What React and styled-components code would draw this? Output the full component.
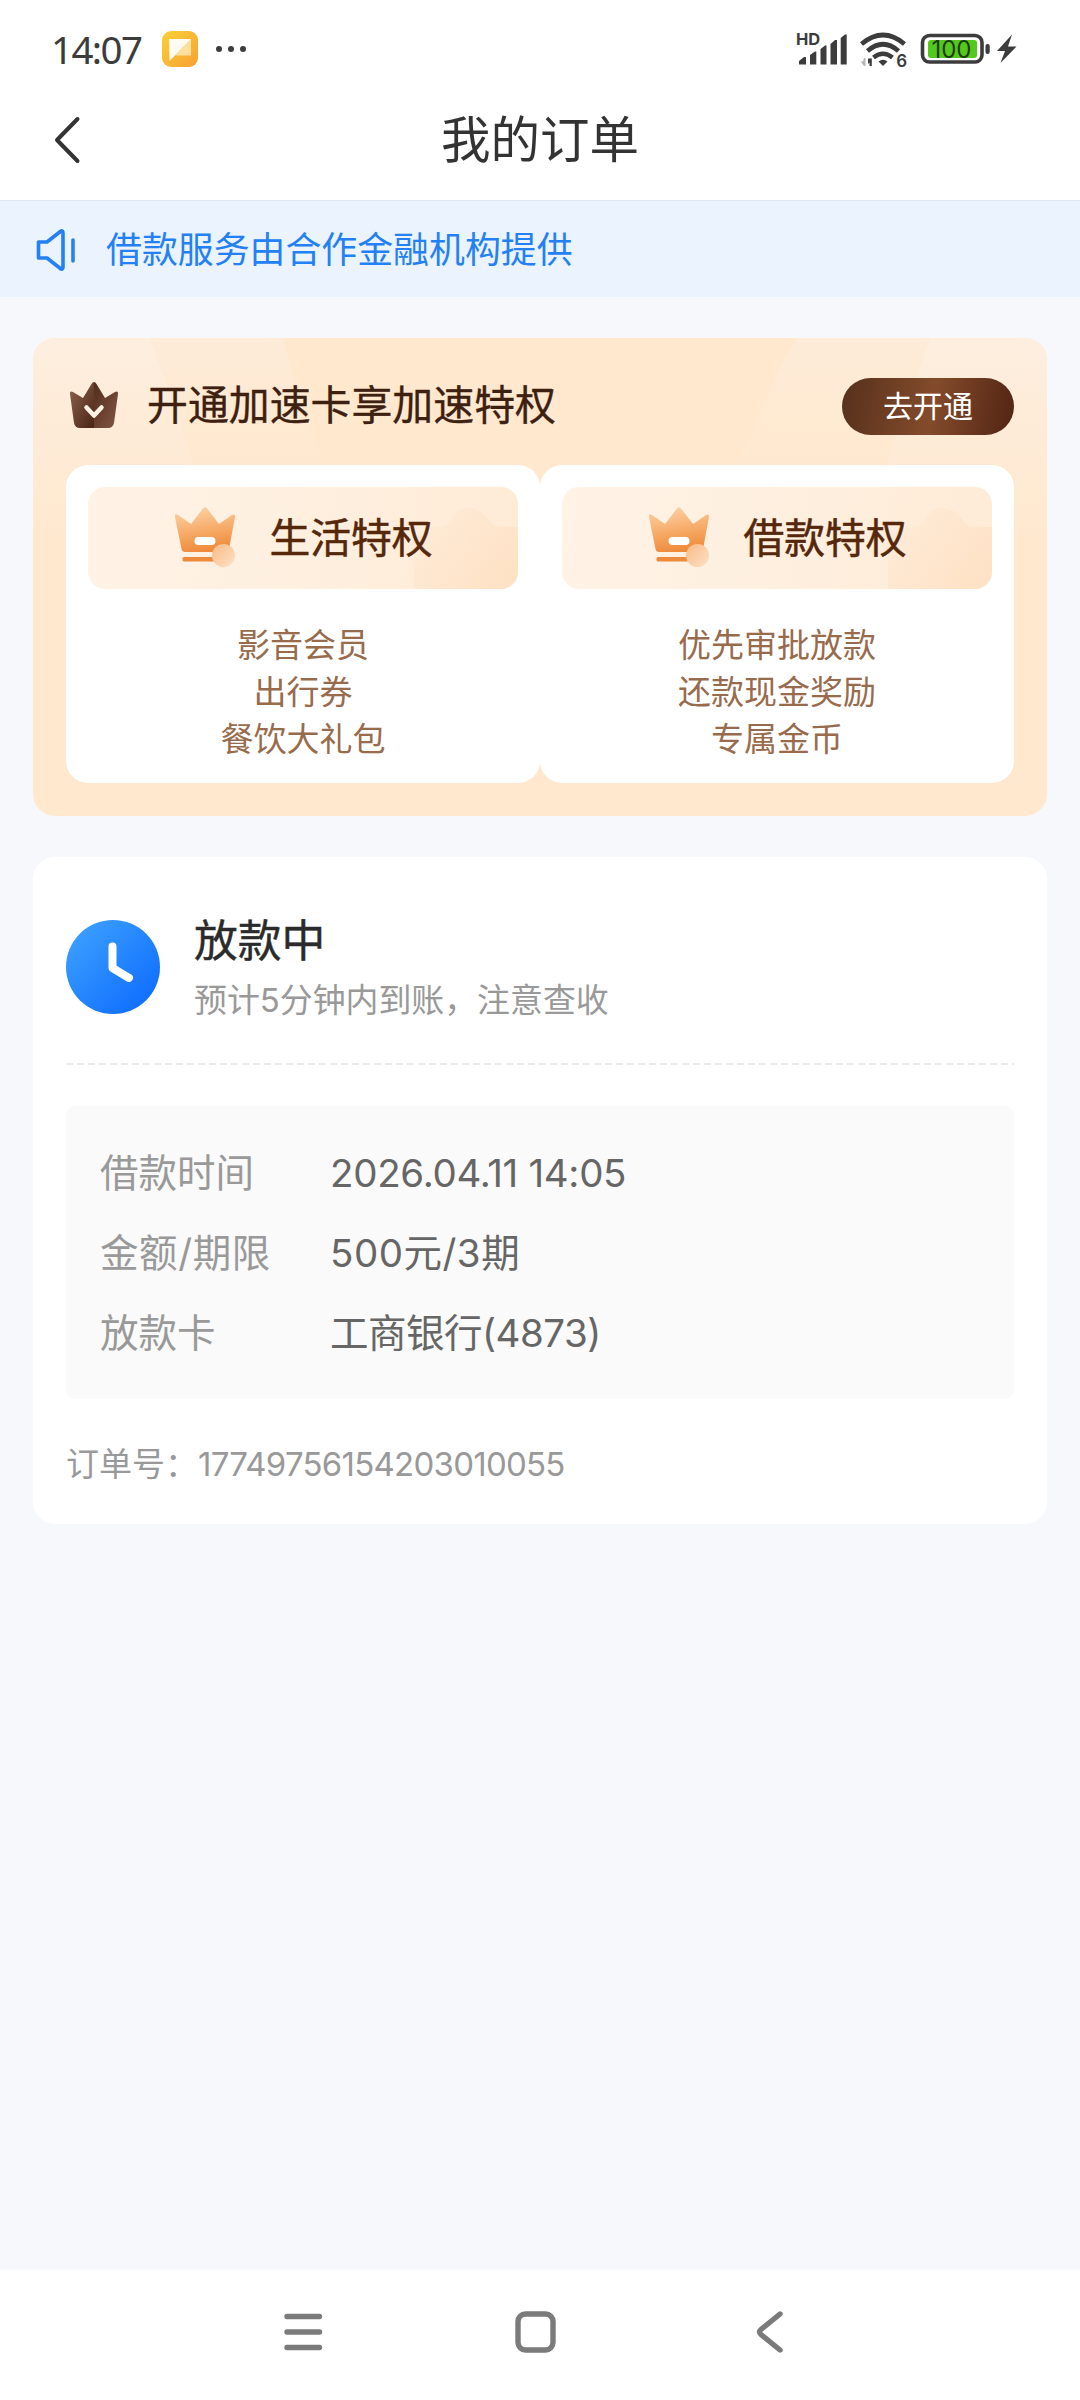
// src/App.jsx

import React from 'react';
import styled, { createGlobalStyle } from 'styled-components';

const GlobalStyle = createGlobalStyle`
    * {
        box-sizing: border-box;
    }

    body {
        margin: 0;
        background: #f6f8fb;
        font-family: Inter, "Noto Sans CJK SC", sans-serif;
        color: #333333;
    }
`;

const Page = styled.div`
    display: flex;
    flex-direction: column;
    width: 1080px;
    height: 2400px;
    background: #f6f8fb;
    white-space: nowrap;
`;

/* Status bar */

const StatusBar = styled.div`
    display: flex;
    align-items: center;
    height: 98px;
    padding: 0 62px 0 51px;
    background: #ffffff;
`;

const Clock = styled.span`
    width: 111px;
    font-family: "Noto Sans", sans-serif;
    font-size: 38.5px;
    line-height: 60px;
    letter-spacing: -1.6px;
    color: #3c3c3c;
`;

const AppBadge = styled.svg`
    width: 36px;
    height: 36px;
    margin-right: 17px;
`;

const Dots = styled.svg`
    width: 32px;
    height: 8px;
    margin-right: auto;
`;

const Indicators = styled.svg`
    width: 222px;
    height: 48px;
    font-family: Inter, sans-serif;
`;

/* Title bar */

const TitleBar = styled.header`
    display: grid;
    grid-template-columns: 200px 1fr 200px;
    align-items: center;
    height: 102px;
    padding-bottom: 18px;
    background: #ffffff;
`;

const BackIcon = styled.svg`
    width: 30px;
    height: 48px;
    margin-left: 52px;
`;

const Title = styled.h1`
    margin: 0;
    font-size: 49.5px;
    line-height: 60px;
    font-weight: 400;
    text-align: center;
    color: #333333;
`;

const Notice = styled.div`
    display: flex;
    align-items: center;
    gap: 30px;
    height: 97px;
    padding-left: 34px;
    border-top: 1px solid #dfe8f1;
    background: #eaf3fe;
    font-size: 35.9px;
    line-height: 48px;
    color: #2380f5;
`;

const NoticeText = styled.span`
    padding-top: 2px;
`;

const SpeakerIcon = styled.svg`
    width: 42px;
    height: 44px;
    margin-top: 2px;
`;

const Content = styled.main`
    display: flex;
    flex-direction: column;
    flex: 1;
    gap: 41px;
    padding: 41px 33px 0;
`;

/* Privilege card */

const PromoCard = styled.section`
    position: relative;
    height: 478px;
    padding: 40px 33px 33px;
    border-radius: 22px;
    background: #ffe8ce;
    overflow: hidden;
`;

const PromoRays = styled.svg`
    position: absolute;
    left: 0;
    top: 0;
    width: 1014px;
    height: 478px;
`;

const PromoHead = styled.div`
    position: relative;
    display: flex;
    align-items: center;
    height: 57px;
    margin-bottom: 30px;
`;

const BadgeIcon = styled.svg`
    width: 50px;
    height: 48px;
    margin: 0 28px 4px 3px;
`;

const PromoTitle = styled.h2`
    margin: 0 auto 3px 0;
    font-size: 40.9px;
    line-height: 54px;
    font-weight: 400;
    color: #3d2010;
    -webkit-text-stroke: 0.35px;
`;

const OpenButton = styled.button`
    width: 172px;
    height: 57px;
    padding: 0;
    border: 0;
    border-radius: 29px;
    background: linear-gradient(100deg, #56301c 0%, #834b2b 52%, #522413 100%);
    font-family: inherit;
    font-size: 30px;
    line-height: 57px;
    color: #ffffff;
`;

const Panels = styled.div`
    position: relative;
    display: grid;
    grid-template-columns: 1fr 1fr;
`;

const Panel = styled.div`
    height: 318px;
    padding: 22px 22px 0;
    border-radius: 22px;
    background: #ffffff;
`;

const PanelHead = styled.div`
    position: relative;
    display: flex;
    align-items: center;
    justify-content: center;
    gap: 34px;
    height: 102px;
    margin-bottom: 33px;
    border-radius: 17px;
    background: linear-gradient(100deg, #fff3e6 0%, #feefdf 50%, #ffebd6 100%);
    overflow: hidden;
`;

const PanelShade = styled.svg`
    position: absolute;
    right: 0;
    bottom: 0;
    width: 104px;
    height: 82px;
`;

const PanelCrown = styled.svg`
    position: relative;
    width: 62px;
    height: 62px;
    margin: 0 -1px 3px 1px;
`;

const PanelTitle = styled.h3`
    position: relative;
    margin: 0 0 1px;
    font-size: 40.8px;
    line-height: 54px;
    font-weight: 400;
    color: #55270b;
    -webkit-text-stroke: 0.5px;
`;

const PerkList = styled.ul`
    margin: 0;
    padding: 0;
    list-style: none;
    text-align: center;
    font-size: 33px;
    line-height: 47px;
    color: #986b4c;
`;

/* Order card */

const OrderCard = styled.section`
    height: 667px;
    padding: 0 33px;
    border-radius: 22px;
    background: #ffffff;
`;

const OrderState = styled.div`
    display: flex;
    align-items: center;
    gap: 34px;
    height: 208px;
    padding-top: 12px;
`;

const StateIcon = styled.svg`
    width: 94px;
    height: 94px;
`;

const StateText = styled.div`
    padding-top: 6px;
`;

const StateTitle = styled.div`
    font-size: 43.8px;
    line-height: 60px;
    color: #2b2b2b;
    -webkit-text-stroke: 0.4px;
`;

const StateHint = styled.div`
    font-size: 32.9px;
    line-height: 56px;
    color: #999999;
`;

const Divider = styled.div`
    height: 2px;
    margin: -2px 0 41px;
    background: repeating-linear-gradient(90deg, #eaeaea 0 7px, transparent 7px 11px);
`;

const Details = styled.dl`
    display: grid;
    grid-template-columns: 230px 1fr;
    grid-auto-rows: 80px;
    align-items: center;
    height: 293px;
    margin: 0 0 38px;
    padding: 27px 34px;
    border-radius: 9px;
    background: #fafafa;
    font-size: 38.5px;
    line-height: 54px;
`;

const Label = styled.dt`
    letter-spacing: ${props => props.$tracking || 0}px;
    color: #999999;
`;

const Value = styled.dd`
    margin: 0;
    letter-spacing: ${props => props.$tracking || 0}px;
    color: #666666;
`;

const OrderNo = styled.div`
    font-size: 33px;
    line-height: 54px;
    color: #999999;
`;

const Digits = styled.span`
    letter-spacing: -0.75px;
`;

/* System navigation */

const NavBar = styled.nav`
    display: flex;
    align-items: center;
    justify-content: space-between;
    height: 130px;
    padding: 0 294px 6px 280px;
    background: #ffffff;
`;

const NavIcon = styled.svg`
    width: 46px;
    height: 46px;
    fill: none;
    stroke: #7b7b7b;
    stroke-width: 5.4;
    stroke-linecap: round;
    stroke-linejoin: round;
`;

const privileges = [
    { id: 'life', title: '生活特权', perks: ['影音会员', '出行券', '餐饮大礼包'] },
    { id: 'loan', title: '借款特权', perks: ['优先审批放款', '还款现金奖励', '专属金币'] },
];

const details = [
    { label: '借款时间', value: '2026.04.11 14:05', tracking: -0.3 },
    { label: '金额/期限', labelTracking: 0.6, value: '500元/3期', tracking: 0.5 },
    { label: '放款卡', value: '工商银行(4873)', tracking: -0.5 },
];

const StatusIndicators = () => (
    <Indicators viewBox="796 25 222 48" fill="#3c3c3c">
        {/* Signal */}
        <text x="796" y="45" fontSize="16.5" fontWeight="700">HD</text>
        <path d="M799 64.5V61L804 57H806V64.5ZM810 64.5V55L815 51.5H816.3V64.5ZM820.5 64.5V49L825 45.5H826.5V64.5ZM830.5 64.5V44L835 40H837V64.5ZM840.7 64.5V38L845 34.5H846.7V64.5Z" />

        {/* Wi-Fi */}
        <g fill="none" stroke="#3c3c3c" strokeWidth="4.6">
            <path d="M861.5 44Q883 26 904.5 44" />
            <path d="M867.5 51Q883 37.5 898.5 51" />
            <path d="M873.5 57.5Q883 50 892.5 57.5" />
        </g>
        <path d="M878.5 61.5Q883 58 887.5 61.5L883 66Z" />
        <path d="M868 66V58.5H871.8V66H869.5V62.5L868 64Z" />
        <path d="M865.5 58V66H864L860.5 61.5H863L864 58Z" fill="#b5b5b5" />
        <text x="896.2" y="67" fontSize="17" fontWeight="600">6</text>

        {/* Battery */}
        <rect x="922.5" y="35.5" width="59.5" height="26.5" rx="7" fill="none" stroke="#3c3c3c" strokeWidth="3.6" />
        <rect x="928" y="40" width="49" height="18" rx="3" fill="#55c81e" />
        <rect x="985.5" y="44" width="4.2" height="10" rx="2" />
        <text x="951.5" y="57.8" fontSize="24" textAnchor="middle" fill="#1d3d10">100</text>
        <path d="M1012 34.500L997 51H1005L1000.5 63L1016.5 46.5H1008Z" />
    </Indicators>
);

const GoldCrown = ({ id }) => (
    <PanelCrown viewBox="0 0 62 62">
        <defs>
            <linearGradient id={`${id}-body`} x1="0.4" y1="0" x2="0.6" y2="1">
                <stop offset="0" stopColor="#fbd0a4" />
                <stop offset="0.5" stopColor="#f7ac6a" />
                <stop offset="1" stopColor="#ee8837" />
            </linearGradient>
            <linearGradient id={`${id}-dot`} x1="0" y1="0" x2="1" y2="1">
                <stop offset="0" stopColor="#f9b984" />
                <stop offset="1" stopColor="#fde2c8" />
            </linearGradient>
        </defs>
        <path
            d="M1 9Q2 7.500 4 9L17 18L29 2.500Q31 0 33 2.500L45 18L58 9Q61 7.500 61 11L55 43Q54.500 46 51 46H11Q8 46 7.500 43L1 11Z"
            fill={`url(#${id}-body)`}
        />
        <rect x="20.500" y="31" width="21" height="8" rx="4" fill="#ffffff" />
        <rect x="8.500" y="51" width="34" height="4.500" rx="1.500" fill="#ed8a3c" />
        <circle cx="49.500" cy="49.500" r="11.500" fill={`url(#${id}-dot)`} />
    </PanelCrown>
);

class App extends React.Component {
    renderPrivilege = ({ id, title, perks }) => (
        <Panel key={id}>
            <PanelHead>
                <PanelShade viewBox="0 0 104 82">
                    <defs>
                        <linearGradient id={`${id}-shade`} x1="0" y1="0" x2="1" y2="0.6">
                            <stop offset="0" stopColor="#feecd9" />
                            <stop offset="1" stopColor="#fee2c6" />
                        </linearGradient>
                    </defs>
                    <path
                        d="M0 82V40C2 26 10 21 22 20C31 20 34 17 38 11C43 3 49 0 56 1C66 2 71 8 77 16C80 20 84 20 104 20V82Z"
                        fill={`url(#${id}-shade)`}
                    />
                </PanelShade>
                <GoldCrown id={id} />
                <PanelTitle>{title}</PanelTitle>
            </PanelHead>
            <PerkList>
                {perks.map(perk => <li key={perk}>{perk}</li>)}
            </PerkList>
        </Panel>
    )

    render() {
        return (
            <Page>
                <GlobalStyle />

                <StatusBar>
                    <Clock>14:07</Clock>
                    <AppBadge viewBox="0 0 36 36">
                        <defs>
                            <linearGradient id="badge" x1="0" y1="0" x2="1" y2="1">
                                <stop offset="0" stopColor="#fad136" />
                                <stop offset="1" stopColor="#f8a033" />
                            </linearGradient>
                        </defs>
                        <rect width="36" height="36" rx="9" fill="url(#badge)" />
                        <path d="M29 8V24.500H13Z" fill="#fde0a0" />
                        <path d="M7 8H29L7.500 30Z" fill="#fffaf0" />
                    </AppBadge>
                    <Dots viewBox="0 0 32 8" fill="#3c3c3c">
                        <circle cx="4" cy="4" r="3" />
                        <circle cx="16" cy="4" r="3" />
                        <circle cx="28" cy="4" r="3" />
                    </Dots>
                    <StatusIndicators />
                </StatusBar>

                <TitleBar>
                    <BackIcon viewBox="0 0 30 48">
                        <path d="M25.500 3L5 24L25.500 45" fill="none" stroke="#333333" strokeWidth="4" strokeLinecap="round" strokeLinejoin="round" />
                    </BackIcon>
                    <Title>我的订单</Title>
                </TitleBar>

                <Notice>
                    <SpeakerIcon viewBox="0 0 42 44" fill="none" stroke="#2380f5" strokeWidth="3.6" strokeLinecap="round" strokeLinejoin="round">
                        <path d="M4.500 14H13L27 3Q29 2.500 29 5V39Q29 41.500 27 41L13 30H4.500Z" />
                        <path d="M39 12V33" />
                    </SpeakerIcon>
                    <NoticeText>借款服务由合作金融机构提供</NoticeText>
                </Notice>

                <Content>
                    <PromoCard>
                        <PromoRays viewBox="0 0 1014 478">
                            <defs>
                                <linearGradient id="ray" x1="0" y1="0" x2="0" y2="1">
                                    <stop offset="0" stopColor="#fdeedf" />
                                    <stop offset="1" stopColor="#fdeedf" stopOpacity="0" />
                                </linearGradient>
                            </defs>
                            <g fill="url(#ray)">
                                <path d="M0 0H117C140 70 165 120 175 200H0Z" />
                                <path d="M117 0H250C262 50 275 90 292 130H155Z" opacity="0.6" />
                                <path d="M1014 0H897C874 70 849 120 839 200H1014Z" />
                                <path d="M897 0H764C740 40 725 80 705 130H859Z" opacity="0.6" />
                            </g>
                        </PromoRays>
                        <PromoHead>
                            <BadgeIcon viewBox="0 0 50 48">
                                <defs>
                                    <linearGradient id="crown-left" x1="0" y1="0" x2="1" y2="1">
                                        <stop offset="0" stopColor="#8d6350" />
                                        <stop offset="1" stopColor="#4a2414" />
                                    </linearGradient>
                                    <linearGradient id="crown-right" x1="0" y1="0" x2="1" y2="1">
                                        <stop offset="0" stopColor="#532c1b" />
                                        <stop offset="1" stopColor="#825645" />
                                    </linearGradient>
                                </defs>
                                <path d="M25 1Q23.500 1 22.500 3L14 17L4 11Q0.500 9.500 1 13L5 42Q6 47 11 47H25Z" fill="url(#crown-left)" />
                                <path d="M25 1Q26.500 1 27.500 3L36 17L46 11Q49.500 9.500 49 13L45 42Q44 47 39 47H25Z" fill="url(#crown-right)" />
                                <path d="M17.500 26.500L25 34.500L32.500 26.500" fill="none" stroke="#fff1e2" strokeWidth="4.500" strokeLinecap="round" strokeLinejoin="round" />
                            </BadgeIcon>
                            <PromoTitle>开通加速卡享加速特权</PromoTitle>
                            <OpenButton>去开通</OpenButton>
                        </PromoHead>
                        <Panels>
                            {privileges.map(this.renderPrivilege)}
                        </Panels>
                    </PromoCard>

                    <OrderCard>
                        <OrderState>
                            <StateIcon viewBox="0 0 94 94">
                                <defs>
                                    <linearGradient id="clock" x1="0.1" y1="0.1" x2="0.9" y2="0.9">
                                        <stop offset="0" stopColor="#3a9fff" />
                                        <stop offset="1" stopColor="#0f6dff" />
                                    </linearGradient>
                                </defs>
                                <circle cx="47" cy="47" r="47" fill="url(#clock)" />
                                <path d="M46.500 26.500V48L63 58" fill="none" stroke="#ffffff" strokeWidth="8" strokeLinecap="round" strokeLinejoin="round" />
                            </StateIcon>
                            <StateText>
                                <StateTitle>放款中</StateTitle>
                                <StateHint>预计5分钟内到账，注意查收</StateHint>
                            </StateText>
                        </OrderState>
                        <Divider />
                        <Details>
                            {details.map(({ label, labelTracking, value, tracking }) => (
                                <React.Fragment key={label}>
                                    <Label $tracking={labelTracking}>{label}</Label>
                                    <Value $tracking={tracking}>{value}</Value>
                                </React.Fragment>
                            ))}
                        </Details>
                        <OrderNo>
                            订单号：<Digits>17749756154203010055</Digits>
                        </OrderNo>
                    </OrderCard>
                </Content>

                <NavBar>
                    <NavIcon viewBox="0 0 46 46">
                        <path d="M7 7.500H39.500M7 23H39.500M7 38.500H39.500" />
                    </NavIcon>
                    <NavIcon viewBox="0 0 46 46">
                        <rect x="8" y="5" width="35" height="36" rx="7.500" />
                    </NavIcon>
                    <NavIcon viewBox="0 0 46 46">
                        <path d="M40 5L21 20.500Q18 23 21 25.500L40 41" />
                    </NavIcon>
                </NavBar>
            </Page>
        );
    }
}

export default App;
